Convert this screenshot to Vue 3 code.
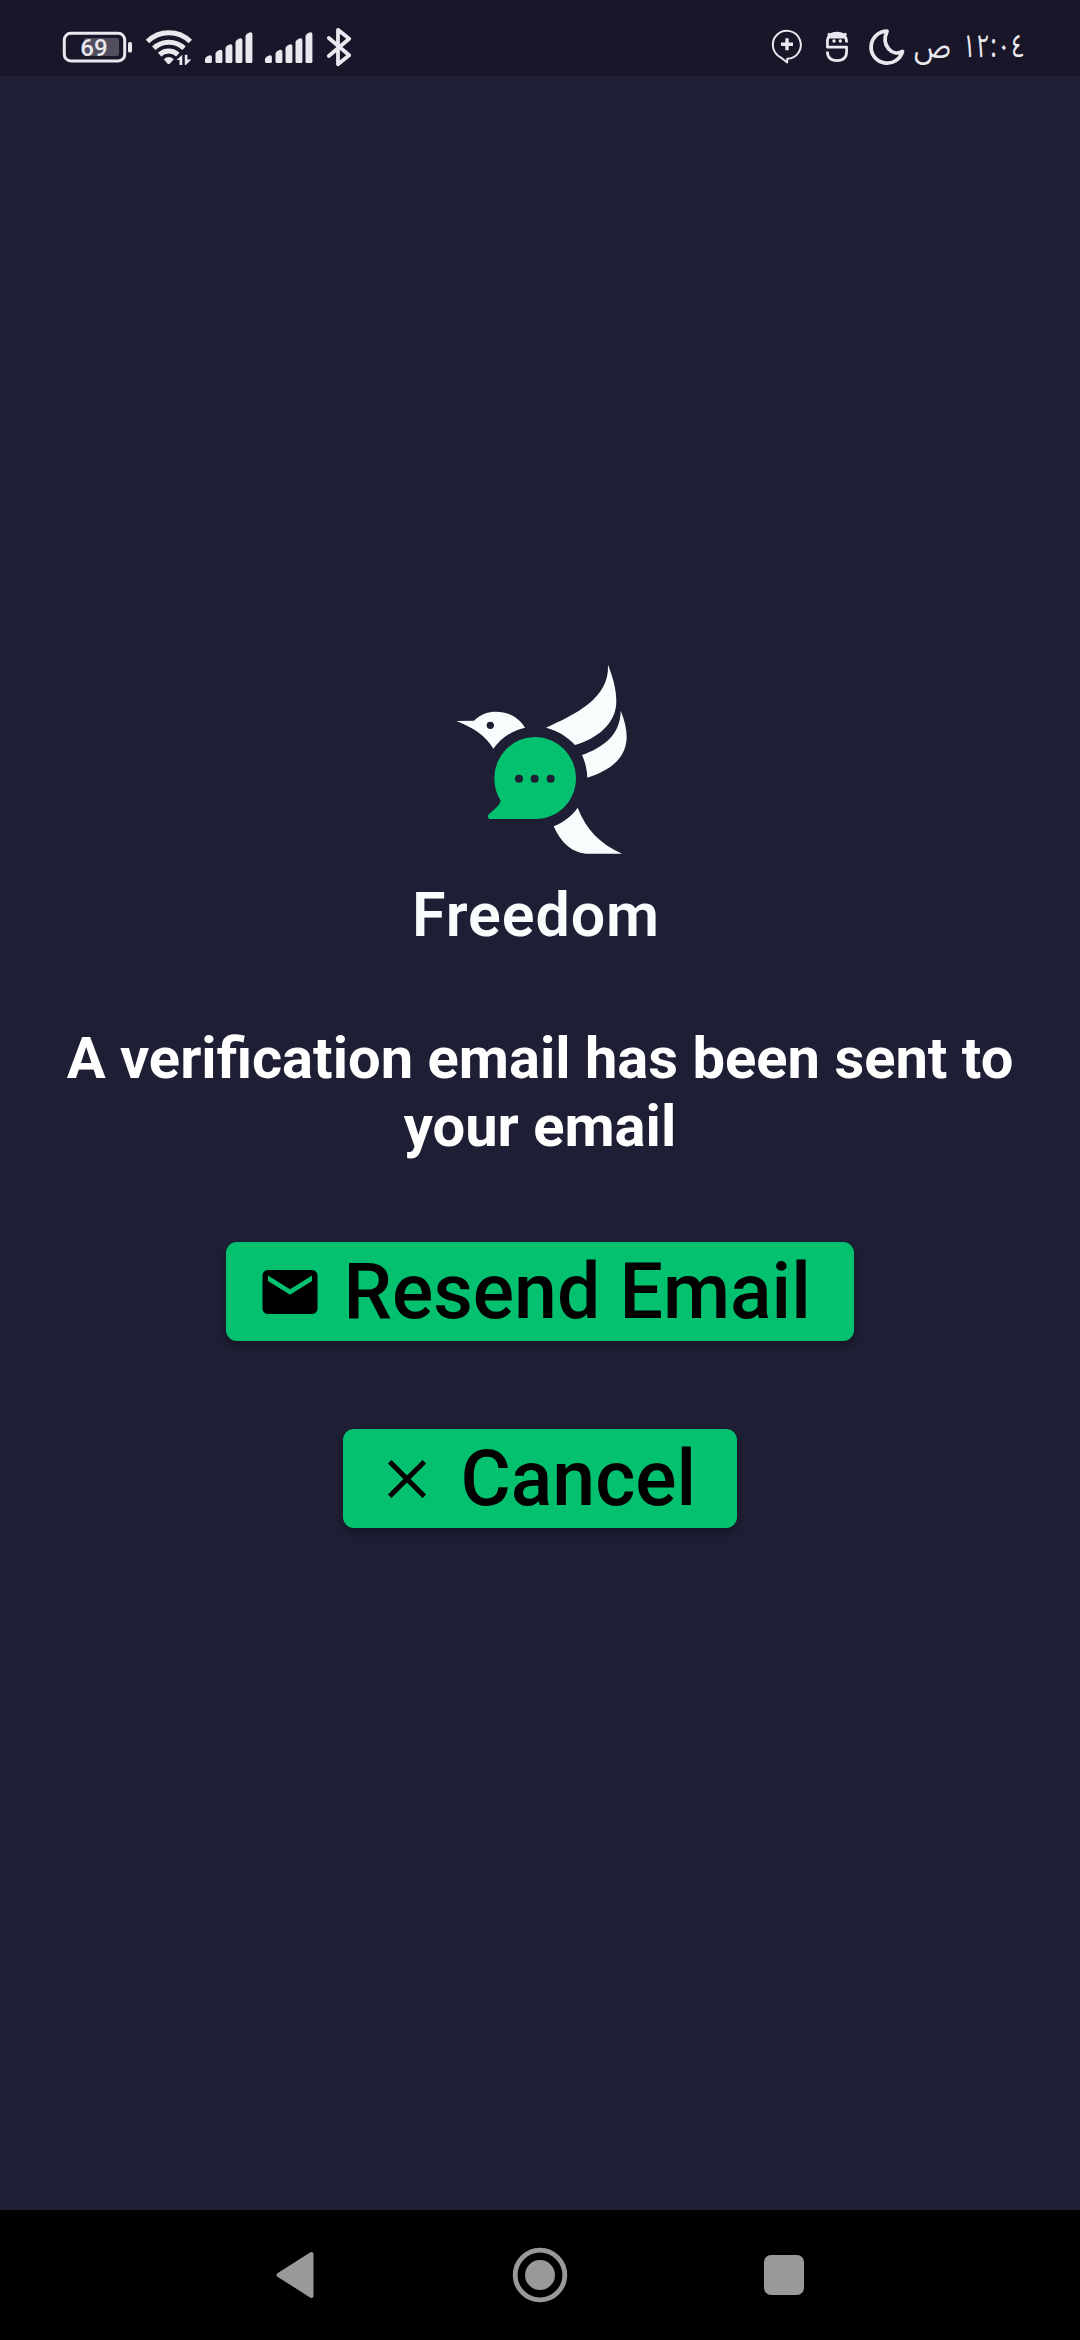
<script setup>
const lead = "A verification email has been sent to your email"
const bars = [
  { x: 0, h: 8 },
  { x: 10.5, h: 13.5 },
  { x: 20.5, h: 19 },
  { x: 30.5, h: 25 },
  { x: 40.5, h: 31 },
]
const sims = [0, 1]
</script>

<template>
  <div class="screen">
    <header class="status">
      <div class="group">
        <svg class="battery" width="74" height="76" viewBox="60 0 74 76">
          <rect x="64.3" y="33.3" width="60.4" height="27.6" rx="6.5" fill="none" stroke="#e9e8ee" stroke-width="3" />
          <rect x="84" y="38" width="35" height="18" rx="2" fill="#514f5f" />
          <rect x="128" y="42" width="4" height="10.5" rx="1.6" fill="#e9e8ee" />
          <text x="94" y="56.3" text-anchor="middle" class="level">69</text>
        </svg>
        <svg width="62" height="76" viewBox="134 0 62 76">
          <g fill="none" stroke="#e9e8ee" stroke-width="5">
            <path d="M147.5 41.5 A30.5 30.5 0 0 1 190.3 41.5" />
            <path d="M153.8 48.3 A22 22 0 0 1 184 48.3" />
            <path d="M159.6 54.6 A13.4 13.4 0 0 1 177.9 54.6" />
          </g>
          <path d="M163.8 59.3 Q168.7 54.8 173.8 59.3 L170 63.4 Q168.7 64.4 167.4 63.4Z" fill="#e9e8ee" />
          <path d="M176.5 60 L182.3 54.8 V65 H179.5 V60Z M184.8 54.8 H187.4 V59.5 H191.4 L185.8 65 H184.8Z" fill="#e9e8ee" />
        </svg>
        <svg v-for="s in sims" :key="s" width="60" height="76" viewBox="-9 0 60 76" fill="#e9e8ee">
          <path
            v-for="b in bars"
            :key="b.x"
            :d="`M${b.x} 61.5 V${63 - b.h + 4} Q${b.x + 0.2} ${63 - b.h + 2} ${b.x + 4} ${63 - b.h + 0.4} Q${b.x + 6.9} ${62.8 - b.h} ${b.x + 6.9} ${63 - b.h + 2} V61.5 Q${b.x + 6.9} 63 ${b.x + 5.4} 63 H${b.x + 1.5} Q${b.x} 63 ${b.x} 61.5Z`"
          />
        </svg>
        <svg width="44" height="76" viewBox="316 0 44 76">
          <path d="M328.8 38 L349.2 55.2 L338 64.2 V29.8 L349.2 38.7 L328.8 56" fill="none" stroke="#e9e8ee" stroke-width="3.8" stroke-linejoin="round" stroke-linecap="round" />
        </svg>
      </div>
      <div class="group">
        <svg width="44" height="76" viewBox="766 0 44 76">
          <path d="M787.2 62.5 L780.5 57.3 A14 14 0 1 1 787.2 58.8Z" fill="none" stroke="#e9e8ee" stroke-width="2" stroke-linejoin="round" />
          <path d="M787 38.3 V50.3 M781 44.3 H793" stroke="#e9e8ee" stroke-width="3.4" />
        </svg>
        <svg width="56" height="76" viewBox="810 0 56 76">
          <path d="M828 33.5 L831 36 M846.3 33.5 L843.3 36" stroke="#e9e8ee" stroke-width="2.4" />
          <path d="M828.8 38.6 Q830.5 33 837 33 Q843.5 33 845.2 38.6Z" fill="#e9e8ee" />
          <circle cx="834" cy="41" r="1.7" fill="#e9e8ee" />
          <circle cx="840.3" cy="41" r="1.7" fill="#e9e8ee" />
          <path d="M846.6 42.5 Q846.6 33.2 837 33.2 Q827.4 33.2 827.4 42 V47.2 H846.6 V51.5 Q846.6 60.6 837 60.6 Q827.4 60.6 827.4 51.5" fill="none" stroke="#e9e8ee" stroke-width="2.7" stroke-linejoin="round" />
        </svg>
        <svg width="45" height="76" viewBox="866 0 45 76">
          <path d="M887 31.2 A16 16 0 1 0 902.5 51.5 C893 57 880.5 46 887 31.2Z" fill="none" stroke="#e9e8ee" stroke-width="3.8" stroke-linejoin="round" />
        </svg>
        <div class="clock" dir="rtl">
          <span class="time">١٢:٠٤</span>
          <span class="period">ص</span>
        </div>
      </div>
    </header>

    <main class="content">
      <svg class="logo" width="200" height="220" viewBox="0 0 600 660">
        <g fill="#f7fdfc">
          <path d="M49 213 L102 212 C122 192 145 185 168 185 C205 185 237 203 255 233 C216 242 183 263 160 296 C137 257 98 232 49 213Z" />
          <path d="M504 44 C519 82 529 118 529 155 C528 222 471 265 405 285 C382 260 352 241 318 233 C404 193 509 146 504 44Z" />
          <path d="M542 182 C554 211 560 235 560 263 C557 329 507 362 442 383 C441 359 436 337 426 315 C487 293 542 256 542 182Z" />
          <path d="M413 473 C438 538 480 581 546 611 H438 C391 607 362 574 341 529 C371 517 394 499 413 473Z" />
        </g>
        <path d="M286 261 A123 123 0 0 1 408 384 C408 454 354 507 286 507 H148 Q141 502 145 494 C160 479 180 467 182 452 C169 432 163 409 163 384 A123 123 0 0 1 286 261Z" fill="#03c16e" />
        <g fill="#1e1e34">
          <circle cx="151" cy="226" r="11" />
          <circle cx="237" cy="386" r="12" />
          <circle cx="284" cy="386" r="12" />
          <circle cx="332" cy="386" r="12" />
        </g>
      </svg>
      <h1 class="brand">Freedom</h1>
      <p class="lead">{{ lead }}</p>
      <button class="action resend">
        <svg width="66" height="66" viewBox="0 0 24 24">
          <path d="M20 4H4c-1.1 0-1.99.9-1.99 2L2 18c0 1.1.9 2 2 2h16c1.1 0 2-.9 2-2V6c0-1.1-.9-2-2-2zm0 4l-8 5-8-5V6l8 5 8-5v2z" />
        </svg>
        <span>Resend Email</span>
      </button>
      <button class="action cancel">
        <svg width="66" height="66" viewBox="0 0 24 24">
          <path d="M5.7 5.7 L18.3 18.3 M18.3 5.7 L5.7 18.3" fill="none" stroke="#000" stroke-width="1.85" />
        </svg>
        <span>Cancel</span>
      </button>
    </main>

    <footer class="nav">
      <svg width="54" height="54" viewBox="0 0 54 54">
        <path d="M9.5 27 L42.5 6 V48Z" fill="#999" stroke="#999" stroke-width="4" stroke-linejoin="round" />
      </svg>
      <svg width="56" height="56" viewBox="0 0 56 56">
        <circle cx="28" cy="28" r="24.8" fill="none" stroke="#999" stroke-width="4.8" />
        <circle cx="28" cy="28" r="15" fill="#999" />
      </svg>
      <svg width="54" height="54" viewBox="0 0 54 54">
        <rect x="7" y="7" width="40" height="40" rx="7" fill="#999" />
      </svg>
    </footer>
  </div>
</template>

<style>
body {
  background: #1e1e34;
}
</style>

<style scoped>
.screen {
  width: 1080px;
  height: 2340px;
  display: flex;
  flex-direction: column;
  background: #1e1e34;
  font-family: Roboto, sans-serif;
  overflow: hidden;
}
.screen svg {
  display: block;
  flex: none;
}
.status {
  height: 76px;
  flex: none;
  display: flex;
  justify-content: space-between;
  padding: 0 55px 0 60px;
  background: #181628;
}
.group {
  display: flex;
}
.level {
  font: 500 24px Roboto, sans-serif;
  fill: #e9e8ee;
}
.clock {
  width: 114px;
  display: flex;
  justify-content: space-between;
  padding: 9px 0 0 3px;
  box-sizing: border-box;
  font: 32px/76px "Noto Sans Arabic", "DejaVu Sans", sans-serif;
  color: #e9e8ee;
  white-space: nowrap;
}
.time {
  width: 62px;
  transform: scaleX(0.77);
  transform-origin: right center;
}
.period {
  width: 38px;
  direction: ltr;
  transform: scaleX(0.88);
  transform-origin: left center;
}
.content {
  flex: 1;
  display: flex;
  flex-direction: column;
  align-items: center;
  padding-top: 574px;
}
.brand {
  margin: 10px 8px 0 0;
  font-size: 61px;
  line-height: 70px;
  font-weight: 600;
  letter-spacing: 0.9px;
  color: #f7fdfc;
}
.lead {
  margin: 74px 0 0;
  width: 1000px;
  text-align: center;
  font-size: 57.9px;
  line-height: 68px;
  font-weight: 700;
  color: #fff;
}
.action {
  height: 99px;
  display: flex;
  align-items: center;
  gap: 20.5px;
  padding: 0 0 0 31px;
  border: 0;
  border-radius: 11px;
  background: #03c16e;
  color: #000;
  font: 500 77px/90px Roboto, sans-serif;
  white-space: nowrap;
  box-shadow: 0 5px 6px rgba(0, 0, 0, 0.25);
}
.resend {
  width: 628px;
  margin-top: 82px;
}
.cancel {
  width: 394px;
  margin-top: 88px;
}
.nav {
  height: 130px;
  flex: none;
  display: flex;
  align-items: center;
  justify-content: center;
  gap: 189px;
  background: #000;
}
</style>
